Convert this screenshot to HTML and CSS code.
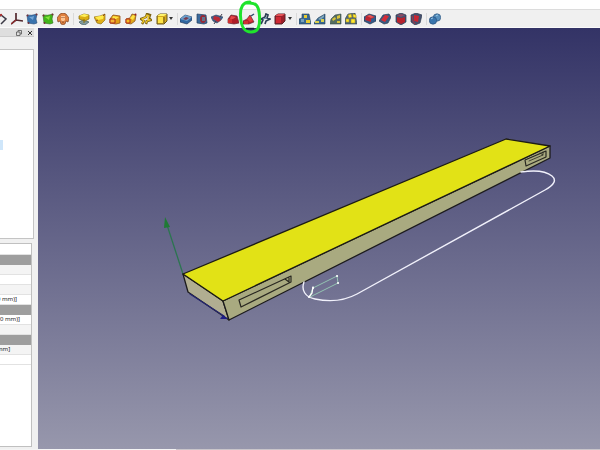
FILE: index.html
```
<!DOCTYPE html>
<html lang="en">
<head>
<meta charset="utf-8">
<title>Part Design</title>
<link rel="stylesheet" href="styles.css">
</head>
<body>
<svg class="symbols" aria-hidden="true">
  <symbol id="polyline" viewBox="0 0 12 12"><path d="M1 7 6 2l5 4-5 5" fill="none" stroke="#3b3a45" stroke-width="1.5"/><circle cx="6" cy="2" r="1.200" fill="#a33"/></symbol>
  <symbol id="axes" viewBox="0 0 12 12"><path d="M5 0v7L0 11M5 7l7 1" fill="none" stroke="#53282d" stroke-width="1.7"/><path d="M5 7 0 11" stroke="#a52a2a" stroke-width="1"/></symbol>
  <symbol id="bluesheet" viewBox="0 0 12 12"><path d="M1 2q4 1 10-1L10 6l1 4-3 1-6-1z" fill="#3973ad" stroke="#234a75" stroke-width=".6"/><path d="M3 4q3 0 5-1L7 7z" fill="#73a6d6"/><circle cx="1.500" cy="2.500" r="1" fill="#753037"/><circle cx="10.500" cy="1.500" r="1" fill="#753037"/><circle cx="2.500" cy="10" r="1" fill="#753037"/></symbol>
  <symbol id="greensheet" viewBox="0 0 12 12"><path d="M1 2q4 1 10-1L10 6l1 4-3 1-6-1z" fill="#42b51a" stroke="#2b711e" stroke-width=".6"/><path d="M3 4q3 0 5-1L7 7z" fill="#83e63a"/><circle cx="1.500" cy="2.500" r="1" fill="#753037"/><circle cx="10.500" cy="1.500" r="1" fill="#753037"/><circle cx="2.500" cy="10" r="1" fill="#753037"/></symbol>
  <symbol id="clone" viewBox="0 0 12 12"><path d="M3 1q3-2 6 0l3 4-1 4-2-1-1 3q-2 1-4 0L3 8 1 9 0 5z" fill="#df803e" stroke="#80401f" stroke-width=".7"/><path d="M4 3h4v4L6 9 4 7z" fill="#ffc490"/><path d="M5 4v1M7 4v1M6 8v2" stroke="#693319" stroke-width=".8"/></symbol>
  <symbol id="pad" viewBox="0 0 12 12"><path d="M1 9 5 7l6 2-4 3-4-1z" fill="#80999b" stroke="#455f63" stroke-width=".7"/><path d="M1 3v3l6 2 4-2V2L6 1z" fill="#dbae13" stroke="#806611" stroke-width=".7"/><path d="M1 3 6 1l5 1-4 2z" fill="#fff05b"/><path d="M6 6v4" stroke="#886b09"/></symbol>
  <symbol id="revolve" viewBox="0 0 12 12"><path d="M0 4 6 3l5-2v6l-4 4-4-1z" fill="#dfae17" stroke="#917019" stroke-width=".7"/><path d="m1 4 5-1 4-1-1 4-5 1z" fill="#ffeb4a"/><path d="m2 8 2-1M9 3l2-2" stroke="#8a4a20"/></symbol>
  <symbol id="loft" viewBox="0 0 12 12"><path d="m1 6 3-4 7 1v7l-4 1-6-1z" fill="#df9e16" stroke="#93501a" stroke-width=".8"/><path d="m4 3 6 1-3 2H3z" fill="#ffe445"/><path d="M1 6h5v4H1z" fill="#f2b436" stroke="#a92518"/></symbol>
  <symbol id="pipe" viewBox="0 0 12 12"><path d="m1 6 4-1 2-4 4 1-1 6-4 3-5-1z" fill="#dfa619" stroke="#895522" stroke-width=".8"/><path d="m5 5 3-3 2 1-2 4z" fill="#ffe445"/><path d="M1 6h4v4H1z" fill="#f5bc24" stroke="#b42818"/><circle cx="10.500" cy="1.500" r="1" fill="#922"/></symbol>
  <symbol id="helix" viewBox="0 0 12 12"><path d="M2 11 4 8 1 6l5-2 1-3 3 1-1 3 2 2-4 1-1 3" fill="none" stroke="#7d6414" stroke-width="2.400"/><path d="M2 10 4 8 2 6l4-2 1-2 2 1-1 3 2 1-3 1-1 2" fill="none" stroke="#f0c824" stroke-width="1.200"/></symbol>
  <symbol id="box" viewBox="0 0 12 12"><path d="m1 3 3-2h7v7l-3 3H1z" fill="#d3a81c" stroke="#6b581d"/><path d="m1 3 3-2h7L8 3z" fill="#fff36c"/><path d="M2 4h5v6H2z" fill="#ffe446"/><path d="M8 4v6" stroke="#6b581d"/></symbol>
  <symbol id="pocket" viewBox="0 0 12 12"><path d="m0 6 5-4 7 2v3l-5 4-7-2z" fill="#3167a1" stroke="#273b5c" stroke-width=".7"/><path d="m0 6 5-4 7 2-5 4z" fill="#6da0cb"/><path d="m3 6 3-2 3 1-3 2z" fill="#783b4c"/></symbol>
  <symbol id="hole" viewBox="0 0 12 12"><path d="m1 1 9 1 1 8-3 1-7-1z" fill="#396a9d" stroke="#26405e" stroke-width=".7"/><ellipse cx="7" cy="6" rx="3" ry="4" fill="#972834"/><path d="M6 4h3v4H6z" fill="#62758d"/></symbol>
  <symbol id="groove" viewBox="0 0 12 12"><path d="m0 4 5-2 7 2-2 3-4 3-4-2z" fill="#3d628e" stroke="#293e5c" stroke-width=".6"/><path d="m3 3 5 1 2 3-3 2-5-3z" fill="#b92a35"/><path d="m3 11 2-3M9 4l2-3" stroke="#3f3a4a"/></symbol>
  <symbol id="subloft" viewBox="0 0 12 12"><path d="m1 6 3-4 6 1 2 7-5 1-6-1z" fill="#ae1c28" stroke="#682530" stroke-width=".7"/><path d="m4 3 5 1-3 2H3z" fill="#e54a4b"/><path d="M1 6h4v4H1z" fill="#cf3030"/></symbol>
  <symbol id="subpipe" viewBox="0 0 12 12"><path d="m0 8 4-2 3-4 4 7-5 2-6 0z" fill="#b91e2a" stroke="#60303b" stroke-width=".7"/><path d="m4 6 3-3 3 5-3 1z" fill="#df3b3e"/><path d="M1 8h4v3H1z" fill="#d03233"/><path d="m8 3 3-2" stroke="#344a6c" stroke-width="1.500"/></symbol>
  <symbol id="subhelix" viewBox="0 0 12 12"><path d="m2 11 2-4-2-1 4-2 1-3 2 1-1 3 3 1-4 2-1 3" fill="none" stroke="#2c4056" stroke-width="1.700"/><path d="m4 6 4-1" stroke="#668eae"/></symbol>
  <symbol id="redbox" viewBox="0 0 12 12"><path d="m1 3 3-2h7v7l-3 3H1z" fill="#9c202a" stroke="#5b252b"/><path d="m1 3 3-2h7L8 3z" fill="#e35457"/><path d="M2 4h5v6H2z" fill="#cf2933"/></symbol>
  <symbol id="mirror" viewBox="0 0 12 12"><path d="M0 11V6l3-1V1h7l2 10z" fill="#386791" stroke="#28435b" stroke-width=".6"/><path d="M5 2h3v3H5zM7 7h4v3H7z" fill="#e6cb31"/><path d="M2 6h3v3H2z" fill="#75a0bb"/></symbol>
  <symbol id="linear" viewBox="0 0 12 12"><path d="m0 10 4-5 7-4v10H0z" fill="#386791" stroke="#28435b" stroke-width=".6"/><path d="M1 8h4v2H1zM7 6h3v3H7z" fill="#d9cf4d"/><path d="m4 6 6-4v2L6 7z" fill="#82a9bd"/></symbol>
  <symbol id="polar" viewBox="0 0 12 12"><path d="m0 11 1-5 4-4 6-1v10z" fill="#546d60" stroke="#364b47" stroke-width=".6"/><path d="m2 6 3-2 1 2-3 2zM7 3l3-1v3L7 6zM7 8h3v2H7z" fill="#d9c43a"/></symbol>
  <symbol id="multi" viewBox="0 0 12 12"><path d="M0 11V6l3-5 7-1 2 11z" fill="#4d687a" stroke="#34434b" stroke-width=".6"/><path d="m3 2 3-1 1 3-3 1zM8 1l3 1v3L8 4zM1 6h3v3H1zM6 6h4v4H6z" fill="#ffe82e" stroke="#ad9525" stroke-width=".6"/></symbol>
  <symbol id="fillet" viewBox="0 0 12 12"><path d="m0 4 5-3 7 2v5l-6 3-6-3z" fill="#345c8b" stroke="#27364f" stroke-width=".7"/><path d="m2 3 4-1 5 2-4 2v3L1 7z" fill="#bd2631"/><path d="m3 3 3-1 4 2-3 1z" fill="#e45855"/></symbol>
  <symbol id="chamfer" viewBox="0 0 12 12"><path d="m0 8 4-6 6-1 2 3-3 6-4 1z" fill="#385b83" stroke="#2e3b52" stroke-width=".7"/><path d="m2 7 4-5 4 1-4 6z" fill="#d52c36"/></symbol>
  <symbol id="draft" viewBox="0 0 12 12"><path d="m1 2 5-2 5 2v7l-5 3-5-3z" fill="#3f5374" stroke="#303b50" stroke-width=".7"/><path d="m2 4 4 1 4-1v5l-4 2-4-2z" fill="#b7222d"/><path d="m2 2 4-1 4 1-4 2z" fill="#8c4b62"/></symbol>
  <symbol id="thickness" viewBox="0 0 12 12"><path d="m1 2 5-2 6 2-2 8-5 2-4-3z" fill="#44516e" stroke="#303b50" stroke-width=".7"/><path d="m4 2 5 1-1 6-4-1z" fill="#c82733"/><path d="m2 3 1 5 2 3" fill="none" stroke="#a83241"/></symbol>
  <symbol id="boolean" viewBox="0 0 12 12"><circle cx="8" cy="4.500" r="3.700" fill="#568fbd" stroke="#2d557e" stroke-width=".7"/><circle cx="4" cy="7.500" r="3.700" fill="#3975ad" stroke="#29527c" stroke-width=".7"/><path d="M2 6q1-1 2-1M7 3q1-1 2-1" stroke="#9bc9e7" fill="none"/></symbol>
  <symbol id="arrow" viewBox="0 0 4 3"><path d="M0 0h4L2 3z" fill="#333"/></symbol>
</svg>

<div class="app">
  <header class="toolbar">
    <div class="group datum">
      <button aria-label="Polyline"><svg><use href="#polyline"/></svg></button>
      <button aria-label="Axes"><svg><use href="#axes"/></svg></button>
      <button aria-label="Shape binder"><svg><use href="#bluesheet"/></svg></button>
      <button aria-label="Sub-shape binder"><svg><use href="#greensheet"/></svg></button>
      <button aria-label="Clone"><svg><use href="#clone"/></svg></button>
    </div>
    <div class="group additive">
      <button aria-label="Pad"><svg><use href="#pad"/></svg></button>
      <button aria-label="Revolution"><svg><use href="#revolve"/></svg></button>
      <button aria-label="Additive loft"><svg><use href="#loft"/></svg></button>
      <button aria-label="Additive pipe"><svg><use href="#pipe"/></svg></button>
      <button aria-label="Additive helix"><svg><use href="#helix"/></svg></button>
      <button aria-label="Additive box"><svg><use href="#box"/></svg></button>
      <button class="more" aria-label="More additive shapes"><svg><use href="#arrow"/></svg></button>
    </div>
    <div class="group subtractive">
      <button aria-label="Pocket"><svg><use href="#pocket"/></svg></button>
      <button aria-label="Hole"><svg><use href="#hole"/></svg></button>
      <button aria-label="Groove"><svg><use href="#groove"/></svg></button>
      <button aria-label="Subtractive loft"><svg><use href="#subloft"/></svg></button>
      <button class="marked" aria-label="Subtractive pipe"><svg><use href="#subpipe"/></svg>
        <svg class="ring" viewBox="0 0 26 36"><path d="M13 3C6 3 3 8 3.500 17S6 33 14 33s9-7 8.500-16S20 3 10 4" fill="none" stroke="#1fe32c" stroke-width="3" stroke-linecap="round"/><path d="M9 29.500h8" stroke="#17203a" stroke-width="1.500"/></svg></button>
      <button aria-label="Subtractive helix"><svg><use href="#subhelix"/></svg></button>
      <button aria-label="Subtractive box"><svg><use href="#redbox"/></svg></button>
      <button class="more" aria-label="More subtractive shapes"><svg><use href="#arrow"/></svg></button>
    </div>
    <div class="group pattern">
      <button aria-label="Mirrored"><svg><use href="#mirror"/></svg></button>
      <button aria-label="Linear pattern"><svg><use href="#linear"/></svg></button>
      <button aria-label="Polar pattern"><svg><use href="#polar"/></svg></button>
      <button aria-label="Multi transform"><svg><use href="#multi"/></svg></button>
    </div>
    <div class="group dress">
      <button aria-label="Fillet"><svg><use href="#fillet"/></svg></button>
      <button aria-label="Chamfer"><svg><use href="#chamfer"/></svg></button>
      <button aria-label="Draft"><svg><use href="#draft"/></svg></button>
      <button aria-label="Thickness"><svg><use href="#thickness"/></svg></button>
    </div>
    <div class="group">
      <button aria-label="Boolean"><svg><use href="#boolean"/></svg></button>
    </div>
  </header>

  <div class="workspace">
    <aside class="sidebar">
      <div class="dock-title">
        <button aria-label="Float"><svg viewBox="0 0 6 6"><path d="M2 2V.5h3.500V4H4M.5 2H4v3.500H.5z" fill="none" stroke="#555" stroke-width=".8"/></svg></button>
        <button aria-label="Close"><svg viewBox="0 0 6 6"><path d="m1 1 4 4m0-4L1 5" stroke="#333"/></svg></button>
      </div>
      <div class="tree"><div class="selected"></div></div>
      <div class="properties">
        <table>
          <tbody>
            <tr><td></td></tr>
            <tr class="section"><td></td></tr>
            <tr class="alt"><td></td></tr>
            <tr><td></td></tr>
            <tr class="alt"><td></td></tr>
            <tr><td class="cut">0 mm)]</td></tr>
            <tr class="section"><td></td></tr>
            <tr><td>0 mm)]</td></tr>
            <tr class="alt"><td></td></tr>
            <tr class="section"><td></td></tr>
            <tr class="alt"><td class="cut">mm]</td></tr>
            <tr><td></td></tr>
          </tbody>
        </table>
      </div>
    </aside>
    <main class="viewport">
      <svg viewBox="38 28 562 421" role="img" aria-label="3D view of a slotted bar with sweep path">
        <g stroke-linejoin="round" stroke-linecap="round">
          <path d="m183 274-16-49" stroke="#2c7550" stroke-width="1.300"/>
          <path d="m165 217-1 11 6-1z" fill="#1f7a35"/>
          <path d="m183 274 40 27 6 19-41-28z" fill="#b1ae91" stroke="#1c1b1d" stroke-width="1.300"/>
          <path d="m223 301 327-155v12L229 320z" fill="#a9aa80" stroke="#1c1b1d" stroke-width="1.300"/>
          <path d="m183 274 323-135 44 7-327 155z" fill="#e2e216" stroke="#1c1b14" stroke-width="1.300"/>
          <path d="m190 294 34 22" stroke="#252672" stroke-width="1.200"/>
          <path d="m228 319-8 0 3-4z" fill="#1d1c85"/>
          <path d="m239 300 52-24v6l-50 25zM285 279l4 3v-4" fill="none" stroke="#292820" stroke-width="1.200"/>
          <path d="m525 160 21-9v6l-20 9z" fill="none" stroke="#292820" stroke-width="1.200"/>
          <path d="m529 161 14-6-3-2M543 155v-3" fill="none" stroke="#292820" stroke-width=".8"/>
          <path d="M304 282c-3 8 1 15 11 17 14 3 29 2 42-5l188-104c9-5 12-10 7-14-6-5-18-6-31-4" fill="none" stroke="#f1f1fb" stroke-width="1.400"/>
          <path d="m313 288 24-12 1 7-28 14z" fill="none" stroke="#94c4b2" stroke-width="1"/>
          <path d="m309 297 3-4 1-6" fill="none" stroke="#fff" stroke-width="1.300"/>
          <path d="M337 276h.1M338 283h.1M313 288h.1M309 297h.1" stroke="#fff" stroke-width="2"/>
        </g>
      </svg>
    </main>
  </div>
  <footer class="status"><span></span></footer>
</div>
</body>
</html>
```
FILE: styles.css
```
* { box-sizing: border-box; }

body {
  margin: 0;
  overflow-x: hidden;
  background: #fff;
  font-family: "Noto Sans", sans-serif;
}

button {
  display: block;
  padding: 0;
  border: 0;
  background: none;
}

button svg { display: block; width: 100%; height: 100%; }

.symbols { display: none; }

.app {
  display: flex;
  flex-direction: column;
  min-height: 100vh;
  padding-top: 9px;
}

.toolbar {
  display: flex;
  align-items: center;
  height: 19px;
  background: #f0f0f0;
  border-top: 1px solid #dcdcdc;
  border-bottom: 1px solid #fafafa;
}

.group {
  display: flex;
  flex: none;
  align-items: center;
  justify-content: space-between;
  padding: 0 4px 0 2px;
  border-left: 1px solid #dadada;
}

.group button { flex: none; width: 12px; height: 12px; }
.group .more { width: 4px; height: 3px; margin-left: -2px; }

.datum { width: 78px; margin-left: -5px; padding-left: 0; border-left: 0; }
.additive { width: 104px; padding-left: 4px; }
.subtractive { width: 119px; }
.pattern { width: 65px; }
.dress { width: 65px; }

.marked { position: relative; }

.marked .ring {
  position: absolute;
  top: -14px;
  left: -6px;
  z-index: 2;
  width: 26px;
  height: 36px;
}

.workspace {
  display: grid;
  flex: 1;
  grid-template-columns: 38px 1fr;
}

.sidebar {
  display: flex;
  flex-direction: column;
  padding-right: 4px;
  background: #f0f0f0;
}

.dock-title {
  display: flex;
  justify-content: flex-end;
  gap: 5px;
  height: 9px;
  padding: 2px 1px 0 0;
  background: #dedede;
  border-bottom: 1px solid #ccc;
}

.dock-title button { width: 6px; height: 6px; }

.tree {
  height: 190px;
  margin-top: 12px;
  padding-top: 90px;
  background: #fff;
  border: solid #c4c4c4;
  border-width: 1px 1px 1px 0;
}

.selected { width: 3px; height: 10px; background: #cfe6fa; }

.properties {
  flex: 1;
  margin: 4px 2px 2px 0;
  overflow: hidden;
  background: #fff;
  border: solid #c0c0c0;
  border-width: 1px 1px 1px 0;
}

table { width: 100%; table-layout: fixed; border-collapse: collapse; }

td {
  height: 10px;
  padding: 0;
  border-bottom: 1px solid #e2e2e2;
  color: #222;
  font-size: 6px;
  line-height: 9px;
  white-space: nowrap;
}

.alt { background: #f4f4f4; }
.section { background: #9e9e9e; }
.section td { border-color: #9e9e9e; }
.cut { text-indent: -3px; }

.viewport {
  min-width: 0;
  background: linear-gradient(#333366, #9797ac);
}

.viewport svg { display: block; width: 100%; height: 100%; }

.status {
  display: grid;
  grid-template-columns: 176px 1fr;
  height: 1px;
  background: #c9c5ca;
}

.status span { background: #f4f4f4; }
```
